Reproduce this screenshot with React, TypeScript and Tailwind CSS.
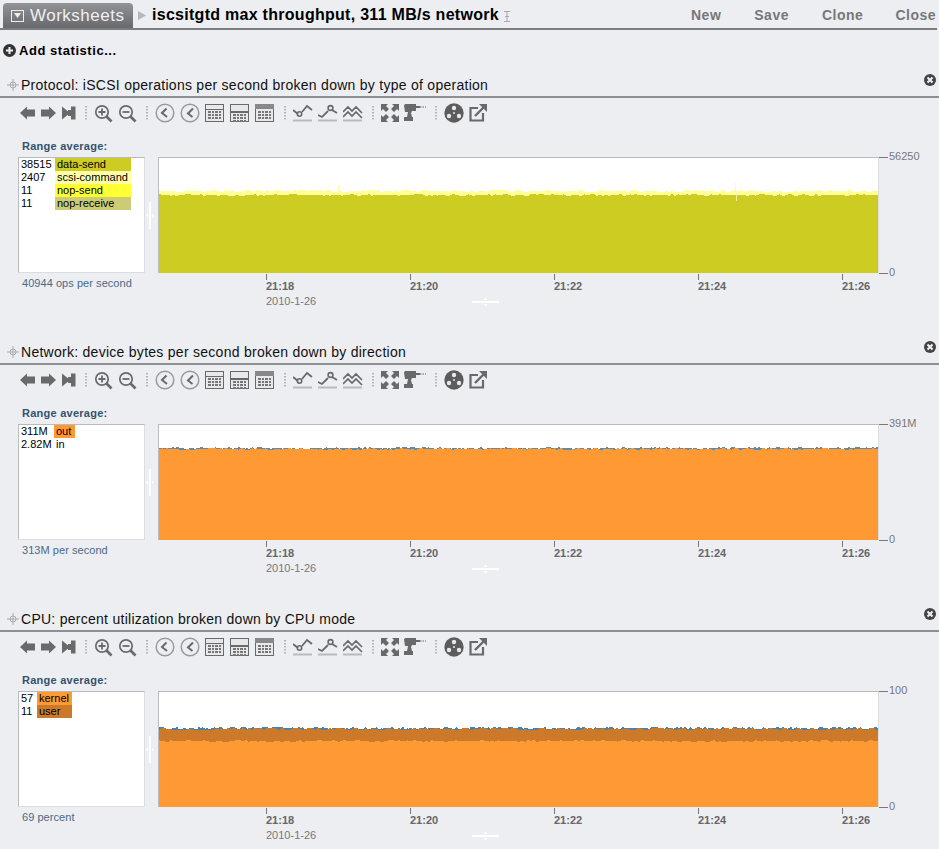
import React from 'react';

// deterministic jitter so the charts look the same on every load
const jitter = (seed: number, i: number) => {
  const v = Math.sin(i * 12.9898 + seed * 78.233) * 43758.5453;
  return v - Math.floor(v) - 0.5;
};

const band = (seed: number, base: number, amp: number, step = 3) => {
  const pts: string[] = [];
  for (let x = 0; x <= 720; x += step) {
    const y = base + jitter(seed, x) * amp;
    pts.push(`${x},${y.toFixed(1)}`);
  }
  return pts;
};

const area = (pts: string[]) => `M0,116 L${pts.join(' L')} L720,116 Z`;

type Layer = {
  color: string;
  seed: number;
  base: number;
  amp: number;
  step?: number;
  spikes?: [number, number][];
  notches?: [number, number, number][];
};

const ChartArea = ({ layers }: { layers: Layer[] }) => (
  <svg width="719" height="116" viewBox="0 0 719 116" className="block" shapeRendering="crispEdges">
    <rect width="719" height="116" fill="#ffffff" />
    {layers.map((l, i) => {
      const pts = band(l.seed, l.base, l.amp, l.step);
      return (
        <g key={i}>
          <path d={area(pts)} fill={l.color} />
          {(l.spikes || []).map(([x, h], j) => (
            <rect key={j} x={x} y={l.base - h} width="1" height={h + 1} fill={l.color} />
          ))}
          {(l.notches || []).map(([x, y, h], j) => (
            <rect key={j} x={x} y={y} width="1" height={h} fill="#eeeea6" />
          ))}
        </g>
      );
    })}
  </svg>
);

const GRAY = '#69696b';

const Back = () => (
  <svg width="16" height="14" viewBox="0 0 16 14"><path d="M0 7 7 .5v3h8v7H7v3z" fill={GRAY} /></svg>
);
const Forward = () => (
  <svg width="16" height="14" viewBox="0 0 16 14"><path d="M15 7 8 .5v3H0v7h8v3z" fill={GRAY} /></svg>
);
const End = () => (
  <svg width="14" height="14" viewBox="0 0 14 14"><path d="M0 .5 8 7l-8 6.5zM9 .5h4.500v13H9z M6 4h3v6H6z" fill={GRAY} /></svg>
);
const Sep = () => (
  <svg width="2" height="16" viewBox="0 0 2 16" className="block">
    {[1, 4, 7, 10, 13].map(y => <rect key={y} x="0" y={y} width="2" height="1.5" fill="#b4b6ba" />)}
  </svg>
);
const Zoom = ({ plus }: { plus?: boolean }) => (
  <svg width="19" height="19" viewBox="0 0 19 19" fill="none" stroke={GRAY}>
    <circle cx="8" cy="8" r="6.2" strokeWidth="1.7" />
    <path d="M12.5 12.5 17.5 17.5" strokeWidth="2.6" />
    <path d={plus ? 'M4.5 8h7M8 4.5v7' : 'M4.5 8h7'} strokeWidth="1.8" />
  </svg>
);
const Clock = ({ bold }: { bold?: boolean }) => (
  <svg width="20" height="20" viewBox="0 0 20 20" fill="none">
    <circle cx="10" cy="10" r="8.8" stroke="#9a9a9c" strokeWidth="1.5" />
    <path d={bold ? 'M13 5.500 8 10.500 12.500 14' : 'M11.500 5.500 7 10 12 14'} stroke={GRAY} strokeWidth="2" />
  </svg>
);
const Table = ({ top, kind }: { top: number; kind: number }) => (
  <svg width="19" height="18" viewBox="0 0 19 18" shapeRendering="crispEdges">
    <rect width="19" height="18" fill={GRAY} />
    <rect x="1" y="1" width="17" height="16" fill="#e8e8ea" />
    {kind === 0 && <rect x="1" y="5" width="17" height="1" fill={GRAY} />}
    {kind === 1 && <rect x="1" y="7" width="17" height="2" fill={GRAY} />}
    {kind === 2 && <rect x="0" y="0" width="19" height="5" fill="#88888a" />}
    {[0, 1, 2].map(r =>
      [0, 1, 2, 3].map(c => (
        <rect key={`${r}${c}`} x={3 + c * 3.5} y={top + r * 3} width="2.5" height="2" fill="#77777a" />
      ))
    )}
  </svg>
);
const Line = ({ kind }: { kind: number }) => (
  <svg width="20" height="19" viewBox="0 0 20 19" fill="none">
    <rect x="0" y="15.5" width="19" height="2" fill="#b9babc" />
    {kind === 0 && (
      <>
        <path d="M0 6 5 10M9 8 14 2 19 6" stroke={GRAY} strokeWidth="1.8" />
        <circle cx="6.5" cy="10" r="2.2" stroke={GRAY} strokeWidth="1.6" />
      </>
    )}
    {kind === 1 && (
      <>
        <path d="M0 11 4 13 10 7M14 6 19 9" stroke={GRAY} strokeWidth="1.8" />
        <circle cx="12.5" cy="4" r="2.4" stroke={GRAY} strokeWidth="1.6" />
      </>
    )}
    {kind === 2 && (
      <path d="M0 8 5 3 9 7 13 3 19 9M0 13 5 8 9 12 13 8 19 14" stroke={GRAY} strokeWidth="1.7" />
    )}
  </svg>
);
const Expand = () => (
  <svg width="18" height="18" viewBox="0 0 18 18" fill={GRAY}>
    <path d="M0 0h7L5 2l3 3-3 3-3-3-2 2zM18 0v7l-2-2-3 3-3-3 3-3-2-2zM0 18v-7l2 2 3-3 3 3-3 3 2 2zM18 18h-7l2-2-3-3 3-3 3 3 2-2z" />
  </svg>
);
const Drill = () => (
  <svg width="22" height="18" viewBox="0 0 22 18">
    <path d="M0 1.500 1 0h11v7H8L7 9l1 4h1v4H0v-4h3l1-5H1z" fill={GRAY} />
    <path d="M12 3h4" stroke={GRAY} strokeWidth="2" />
    <path d="M16 3h6" stroke={GRAY} strokeWidth="1" strokeDasharray="1.5 1" />
  </svg>
);
const Reel = () => (
  <svg width="20" height="20" viewBox="0 0 20 20">
    <circle cx="10" cy="10" r="9.7" fill="#5c5c5e" />
    <circle cx="10" cy="5" r="2.2" fill="#e8e8ea" />
    <circle cx="5" cy="13" r="2.2" fill="#e8e8ea" />
    <circle cx="15" cy="13" r="2.2" fill="#e8e8ea" />
    <circle cx="10" cy="10" r="1" fill="#e8e8ea" />
  </svg>
);
const Export = () => (
  <svg width="18" height="18" viewBox="0 0 18 18" fill="none" stroke={GRAY}>
    <path d="M9 4H1.500v12.500H14V9" strokeWidth="2.2" />
    <path d="M6 12 15 3" strokeWidth="2.4" />
    <path d="M10 0h8v8z" fill={GRAY} stroke="none" />
  </svg>
);

const Toolbar = () => (
  <div className="flex h-[30px] items-center pl-[20px]">
    <Back />
    <span className="ml-[5px]"><Forward /></span>
    <span className="ml-[5px]"><End /></span>
    <span className="ml-[9px]"><Sep /></span>
    <span className="ml-[7px]"><Zoom plus /></span>
    <span className="ml-[5px]"><Zoom /></span>
    <span className="ml-[9px]"><Sep /></span>
    <span className="ml-[7px]"><Clock /></span>
    <span className="ml-[5px]"><Clock bold /></span>
    <span className="ml-[5px]"><Table top={7} kind={0} /></span>
    <span className="ml-[6px]"><Table top={10} kind={1} /></span>
    <span className="ml-[6px]"><Table top={7} kind={2} /></span>
    <span className="ml-[10px]"><Sep /></span>
    <span className="ml-[7px]"><Line kind={0} /></span>
    <span className="ml-[5px]"><Line kind={1} /></span>
    <span className="ml-[5px]"><Line kind={2} /></span>
    <span className="ml-[9px]"><Sep /></span>
    <span className="ml-[7px]"><Expand /></span>
    <span className="ml-[5px]"><Drill /></span>
    <span className="ml-[9px]"><Sep /></span>
    <span className="ml-[7px]"><Reel /></span>
    <span className="ml-[5px]"><Export /></span>
  </div>
);

const MoveIcon = () => (
  <svg width="12" height="12" viewBox="0 0 12 12" fill="none" stroke="#a9aaad">
    <circle cx="6" cy="6" r="3" strokeWidth="1" />
    <path d="M6 0v12M0 6h12" strokeWidth="1" />
  </svg>
);

const CloseIcon = () => (
  <svg width="12" height="12" viewBox="0 0 12 12">
    <circle cx="6" cy="6" r="6" fill="#444446" />
    <path d="M3.500 3.500 8.500 8.500M8.500 3.500 3.500 8.500" stroke="#f2f2f4" strokeWidth="2" />
  </svg>
);

type Row = { value: string; label: string; color?: string };

type PanelData = {
  title: string;
  rows: Row[];
  valueCol: string;
  labelCol: string;
  total: string;
  yMax: string;
  layers: Layer[];
};

const panels: PanelData[] = [
  {
    title: 'Protocol: iSCSI operations per second broken down by type of operation',
    valueCol: 'w-[34px]',
    labelCol: 'w-[76px]',
    rows: [
      { value: '38515', label: 'data-send', color: 'bg-[#cccc22]' },
      { value: '2407', label: 'scsi-command', color: 'bg-[#ffffaa]' },
      { value: '11', label: 'nop-send', color: 'bg-[#ffff33]' },
      { value: '11', label: 'nop-receive', color: 'bg-[#cccc77]' },
    ],
    total: '40944 ops per second',
    yMax: '56250',
    layers: [
      { color: '#ffff99', seed: 1, base: 33, amp: 2.5, spikes: [[179, 6], [576, 8]] },
      { color: '#cccc22', seed: 2, base: 37, amp: 2, notches: [[577, 36, 7]] },
    ],
  },
  {
    title: 'Network: device bytes per second broken down by direction',
    valueCol: 'w-[33px]',
    labelCol: 'w-[21px]',
    rows: [
      { value: '311M', label: 'out', color: 'bg-[#ff9933]' },
      { value: '2.82M', label: 'in' },
    ],
    total: '313M per second',
    yMax: '391M',
    layers: [
      { color: '#5f8aa8', seed: 3, base: 23, amp: 2, step: 2 },
      { color: '#ff9933', seed: 4, base: 24, amp: 2, step: 2 },
    ],
  },
  {
    title: 'CPU: percent utilization broken down by CPU mode',
    valueCol: 'w-[16px]',
    labelCol: 'w-[35px]',
    rows: [
      { value: '57', label: 'kernel', color: 'bg-[#ff9933]' },
      { value: '11', label: 'user', color: 'bg-[#cc7a29]' },
    ],
    total: '69 percent',
    yMax: '100',
    layers: [
      { color: '#4d82a8', seed: 5, base: 36, amp: 3, step: 2 },
      { color: '#cc7a29', seed: 6, base: 37, amp: 3 },
      { color: '#ff9933', seed: 7, base: 49, amp: 2 },
    ],
  },
];

const ticks = ['21:18', '21:20', '21:22', '21:24', '21:26'];

const Panel = ({ data }: { data: PanelData }) => (
  <div className="h-[267px]">
    <div className="flex h-[23px] items-end pl-[7px] pr-[3px]">
      <span className="mb-[5px]"><MoveIcon /></span>
      <span className="mb-[1px] ml-[2px] flex-1 text-[14px] leading-[20px] tracking-[0.27px] text-[#111]">{data.title}</span>
      <span className="mb-[10px]"><CloseIcon /></span>
    </div>
    <div className="h-[2px] bg-[#8e8f93]" />
    <Toolbar />
    <div className="h-[29px] pl-[22px] pt-[12px] text-[11px] font-bold leading-[13px] tracking-[0.25px] text-[#33536e]">Range average:</div>
    <div className="flex h-[116px]">
      <div className="ml-[18px] w-[127px] border-t border-l border-t-[#b9bbbe] border-l-[#b9bbbe] border-r border-b border-r-[#dcdde0] border-b-[#dcdde0] bg-white pl-[2px]">
        {data.rows.map(r => (
          <div key={r.label} className="flex h-[13px] text-[11px] leading-[13px] text-black">
            <span className={`${data.valueCol} shrink-0`}>{r.value}</span>
            <span className={`${data.labelCol} ${r.color ?? ''} shrink-0 whitespace-nowrap pl-[2px]`}>{r.label}</span>
          </div>
        ))}
      </div>
      <div className="flex w-[13px] items-center pl-[1px]">
        <svg width="9" height="27" viewBox="0 0 9 27">
          <rect x="3" width="2" height="27" fill="#ffffff" />
          <path d="M2 11.500v4L0 13.500zM6 11.500v4l2-2z" fill="#ffffff" />
        </svg>
      </div>
      <div className="border-t border-l border-t-[#b9bbbe] border-l-[#b9bbbe] border-r border-r-[#dcdde0]">
        <div className="h-[115px] w-[719px] overflow-hidden">
          <ChartArea layers={data.layers} />
        </div>
      </div>
      <div className="flex w-[59px] flex-col justify-between text-[11px] leading-[13px] text-[#77777a]">
        <div className="-mt-[7px] flex items-center"><span className="mr-[1px] mt-[2px] h-px w-[9px] bg-[#77777a]" />{data.yMax}</div>
        <div className="-mb-[6px] flex items-center"><span className="mr-[1px] mt-[2px] h-px w-[9px] bg-[#77777a]" />0</div>
      </div>
    </div>
    <div className="flex">
      <div className="w-[266px] shrink-0 pl-[22px] pt-[4px] text-[11px] leading-[13px] tracking-[0.05px] text-[#4a6a84]">{data.total}</div>
      <div>
        <div className="flex">
          {ticks.map(t => (
            <div key={t} className="w-[144px] shrink-0 pt-[1px] text-[11px] font-bold leading-[13px] text-[#66666a]">
              <div className="h-[6px] w-px bg-[#77777a]" />
              {t}
            </div>
          ))}
        </div>
        <div className="flex items-center">
          <div className="w-[206px] pt-[2px] text-[11px] leading-[13px] text-[#77777a]">2010-1-26</div>
          <svg width="27" height="10" viewBox="0 0 27 10" className="mt-[2px]">
            <rect y="4" width="27" height="2" fill="#ffffff" />
            <path d="M11.500 3h4l-2-2.500zM11.500 7h4l-2 2.500z" fill="#ffffff" />
          </svg>
        </div>
      </div>
    </div>
  </div>
);

export default function App() {
  return (
    <div className="h-[849px] w-[939px] overflow-hidden bg-[#edeef2] font-['Liberation_Sans',Arial,sans-serif]">
      {/* Top bar */}
      <div className="flex h-[28px] items-end pl-[3px] pr-[3px]">
        <div className="flex h-[25px] w-[130px] items-center rounded-t-[4px] bg-gradient-to-b from-[#929397] to-[#68696d] pl-[8px]">
          <span className="flex h-[12px] w-[13px] items-center justify-center border border-[#eeeeee]">
            <svg width="7" height="5" viewBox="0 0 7 5"><path d="M0 0h7L3.500 5z" fill="#eeeeee" /></svg>
          </span>
          <span className="ml-[6px] text-[17px] leading-[20px] tracking-[0.5px] text-[#f0f0f2]">Worksheets</span>
        </div>
        <svg width="8" height="9" viewBox="0 0 8 9" className="mb-[8px] ml-[5px]"><path d="M0 0l8 4.500L0 9z" fill="#b6b7ba" /></svg>
        <span className="ml-[6px] text-[16px] font-bold leading-[26px] tracking-[0.28px] text-black">iscsitgtd max throughput, 311 MB/s network</span>
        <svg width="8" height="11" viewBox="0 0 8 11" fill="none" stroke="#a9aaad" className="mb-[6px] ml-[4px]"><path d="M1 .5h6M4 .5v10M1 10.500h6M2 5.500h4" /></svg>
        <div className="flex-1" />
        <div className="flex text-[14px] font-bold leading-[26px] tracking-[0.5px] text-[#77777a]">
          <span>New</span>
          <span className="ml-[33px]">Save</span>
          <span className="ml-[33px]">Clone</span>
          <span className="ml-[32px]">Close</span>
        </div>
      </div>
      <div className="mr-[2px] h-[2px] bg-[#7c7d81]" />

      {/* Add statistic */}
      <div className="flex h-[43px] items-center pb-[2px] pl-[3px]">
        <svg width="13" height="13" viewBox="0 0 13 13">
          <circle cx="6.500" cy="6.500" r="6.500" fill="#333335" />
          <path d="M3 6.500h7M6.500 3v7" stroke="#f2f2f4" strokeWidth="2" />
        </svg>
        <span className="ml-[3px] text-[13px] font-bold leading-[16px] tracking-[0.55px] text-black">Add statistic...</span>
      </div>

      {panels.map(p => <Panel key={p.title} data={p} />)}
    </div>
  );
}
